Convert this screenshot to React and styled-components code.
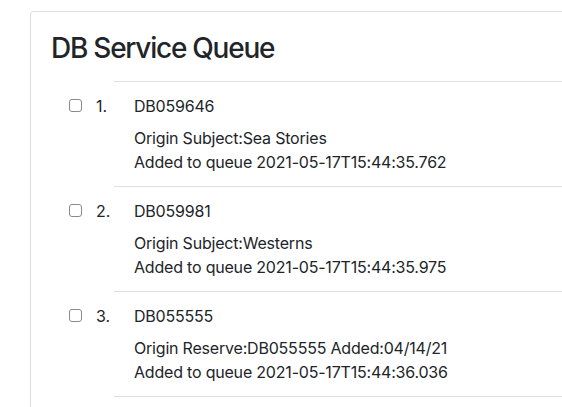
import React from 'react';
import styled, { createGlobalStyle } from 'styled-components';

const GlobalStyle = createGlobalStyle`
    body {
        margin: 0;
        background: #fff;
        font-family: Inter, "Noto Sans", sans-serif;
        color: #212529;
        overflow: hidden;
    }
`

const Page = styled.div`
    height: 100vh;
    overflow: hidden;
    padding: 11px 0 0 30px;
    box-sizing: border-box;
`

const Card = styled.div`
    border: 1px solid rgba(0, 0, 0, .125);
    border-right: none;
    border-bottom: none;
    border-radius: 4px 0 0 0;
    padding: 20px 0 20px 20px;
    min-height: 420px;
`

const Title = styled.h3`
    margin: 0 0 15px;
    font-size: 28px;
    font-weight: 500;
    line-height: 1.2;
    letter-spacing: -1.25px;
`

const QueueList = styled.ol`
    list-style: none;
    margin: 0;
    padding: 0;
`

const QueueRow = styled.li`
    display: flex;
`

const Marker = styled.div`
    width: 63px;
    flex: none;
    display: flex;
    align-items: center;
    height: 24px;
    padding-top: 13px;
    font-size: 16px;
`

const Check = styled.input.attrs({ type: 'checkbox' })`
    appearance: none;
    margin: 0 0 0 18px;
    width: 13px;
    height: 13px;
    border: 1px solid #8a8a8a;
    border-radius: 3px;
    background: #fff;
`

const Num = styled.span`
    margin-left: 14px;
`

const Entry = styled.div`
    flex: 1;
    border-top: 1px solid rgba(0, 0, 0, .125);
    border-bottom: ${props => props.$last ? '1px solid rgba(0, 0, 0, .125)' : 'none'};
    padding: 12px 20px;
    font-size: 16px;
    line-height: 24px;
    letter-spacing: -0.2px;
`

const EntryId = styled.div`
    margin-bottom: 8px;
`

const Detail = styled.div``

const items = [
    { id: 'DB059646', origin: 'Origin Subject:Sea Stories', added: '2021-05-17T15:44:35.762' },
    { id: 'DB059981', origin: 'Origin Subject:Westerns', added: '2021-05-17T15:44:35.975' },
    { id: 'DB055555', origin: 'Origin Reserve:DB055555 Added:04/14/21', added: '2021-05-17T15:44:36.036' },
]

export default function App() {
    return (
        <Page>
            <GlobalStyle />
            <Card>
                <Title>DB Service Queue</Title>
                <QueueList>
                    {items.map((item, i) => (
                        <QueueRow key={item.id}>
                            <Marker>
                                <Check />
                                <Num>{i + 1}.</Num>
                            </Marker>
                            <Entry $last={i === items.length - 1}>
                                <EntryId>{item.id}</EntryId>
                                <Detail>{item.origin}</Detail>
                                <Detail>Added to queue {item.added}</Detail>
                            </Entry>
                        </QueueRow>
                    ))}
                </QueueList>
            </Card>
        </Page>
    )
}
